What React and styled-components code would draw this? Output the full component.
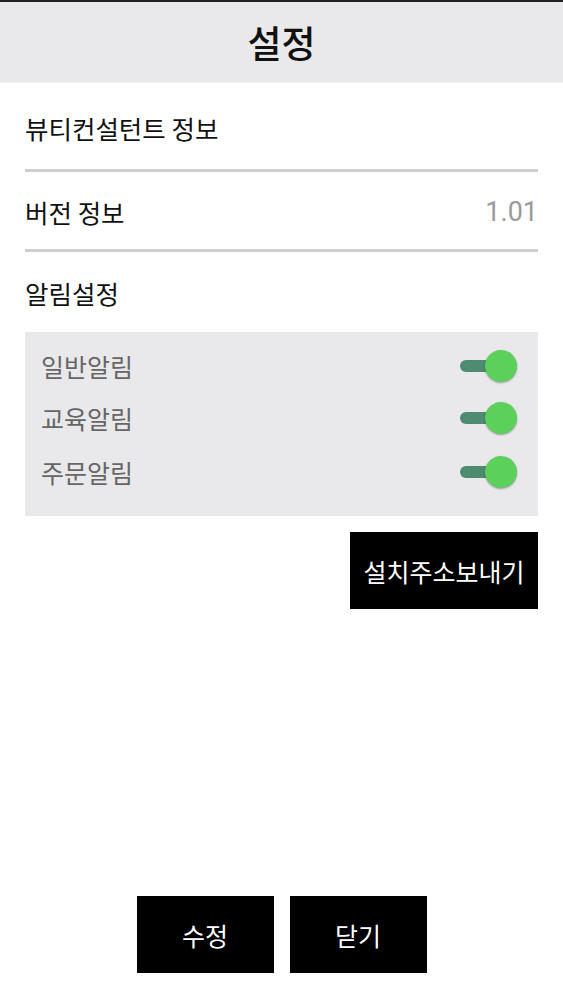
import React, { useState } from "react";
import styled, { createGlobalStyle } from "styled-components";

const Global = createGlobalStyle`
  html, body { margin: 0; padding: 0; background: #fff; }
  body { font-family: "Noto Sans CJK KR", "Noto Sans", Roboto, sans-serif; }
  * { box-sizing: border-box; }
`;

const Page = styled.div`
  width: 563px;
  height: 1000px;
  display: flex;
  flex-direction: column;
  background: #fff;
  border-top: 2px solid #222;
`;

const Header = styled.header`
  height: 81px;
  background: #e9e8ea;
  display: flex;
  align-items: center;
  justify-content: center;
  font-size: 37px;
  font-weight: 500;
  color: #111;
  border-bottom: 1px solid #f2f2f2;
`;

const Body = styled.main`
  flex: 1;
  padding: 0 25px 0 25px;
  display: flex;
  flex-direction: column;
`;

const Row = styled.div`
  height: ${p => p.$h}px;
  display: flex;
  align-items: center;
  justify-content: space-between;
  font-size: 25.5px;
  color: #111;
  padding-top: ${p => p.$pt || 0}px;
  border-bottom: ${p => (p.$divider ? "3px solid #cfcfcf" : "none")};
`;

const Value = styled.span`
  color: #9a9a9a;
  font-family: Roboto, "Noto Sans", sans-serif;
  font-size: 27px;
`;

const Panel = styled.div`
  margin-top: 2px;
  background: #e9e8ea;
  padding: 9px 20px 16px 16px;
  display: flex;
  flex-direction: column;
`;

const ToggleRow = styled.div`
  height: ${p => p.$h}px;
  display: flex;
  align-items: center;
  justify-content: space-between;
  font-size: 25px;
  color: #666;
`;

const Switch = styled.button`
  position: relative;
  width: 58px;
  height: 34px;
  border: none;
  background: transparent;
  padding: 0;
  cursor: pointer;
`;

const Track = styled.span`
  position: absolute;
  left: 0;
  top: 11px;
  width: 36px;
  height: 12px;
  border-radius: 6px;
  background: ${p => (p.$on ? "#4e8b71" : "#9a9a9a")};
`;

const Thumb = styled.span`
  position: absolute;
  top: 1px;
  left: ${p => (p.$on ? 25 : 0)}px;
  width: 32px;
  height: 32px;
  border-radius: 50%;
  background: ${p => (p.$on ? "#5bd05b" : "#f1f1f1")};
  box-shadow: 0 1px 2px rgba(0, 0, 0, 0.35);
`;

const ActionWrap = styled.div`
  display: flex;
  justify-content: flex-end;
  margin-top: 16px;
`;

const BlackButton = styled.button`
  width: ${p => p.$w}px;
  height: 77px;
  background: #000;
  color: #fff;
  border: none;
  font-family: "Noto Sans CJK KR", "Noto Sans", sans-serif;
  font-size: 25px;
  display: flex;
  align-items: center;
  justify-content: center;
  cursor: pointer;
`;

const Footer = styled.footer`
  display: flex;
  justify-content: center;
  gap: 16px;
  padding-bottom: 27px;
`;

function Toggle({ on, onClick }) {
  return (
    <Switch onClick={onClick} aria-pressed={on}>
      <Track $on={on} />
      <Thumb $on={on} />
    </Switch>
  );
}

export default function App() {
  const [toggles, setToggles] = useState([true, true, true]);
  const labels = ["일반알림", "교육알림", "주문알림"];
  const heights = [50, 53, 56];
  const flip = i => setToggles(t => t.map((v, j) => (j === i ? !v : v)));

  return (
    <>
      <Global />
      <Page>
        <Header>설정</Header>
        <Body>
          <Row $h={89} $pt={2} $divider>뷰티컨설턴트 정보</Row>
          <Row $h={80} $pt={2} $divider>
            <span>버전 정보</span>
            <Value>1.01</Value>
          </Row>
          <Row $h={78} $pt={2}>알림설정</Row>
          <Panel>
            {labels.map((l, i) => (
              <ToggleRow key={l} $h={heights[i]}>
                <span>{l}</span>
                <Toggle on={toggles[i]} onClick={() => flip(i)} />
              </ToggleRow>
            ))}
          </Panel>
          <ActionWrap>
            <BlackButton $w={188}>설치주소보내기</BlackButton>
          </ActionWrap>
        </Body>
        <Footer>
          <BlackButton $w={137}>수정</BlackButton>
          <BlackButton $w={137}>닫기</BlackButton>
        </Footer>
      </Page>
    </>
  );
}
